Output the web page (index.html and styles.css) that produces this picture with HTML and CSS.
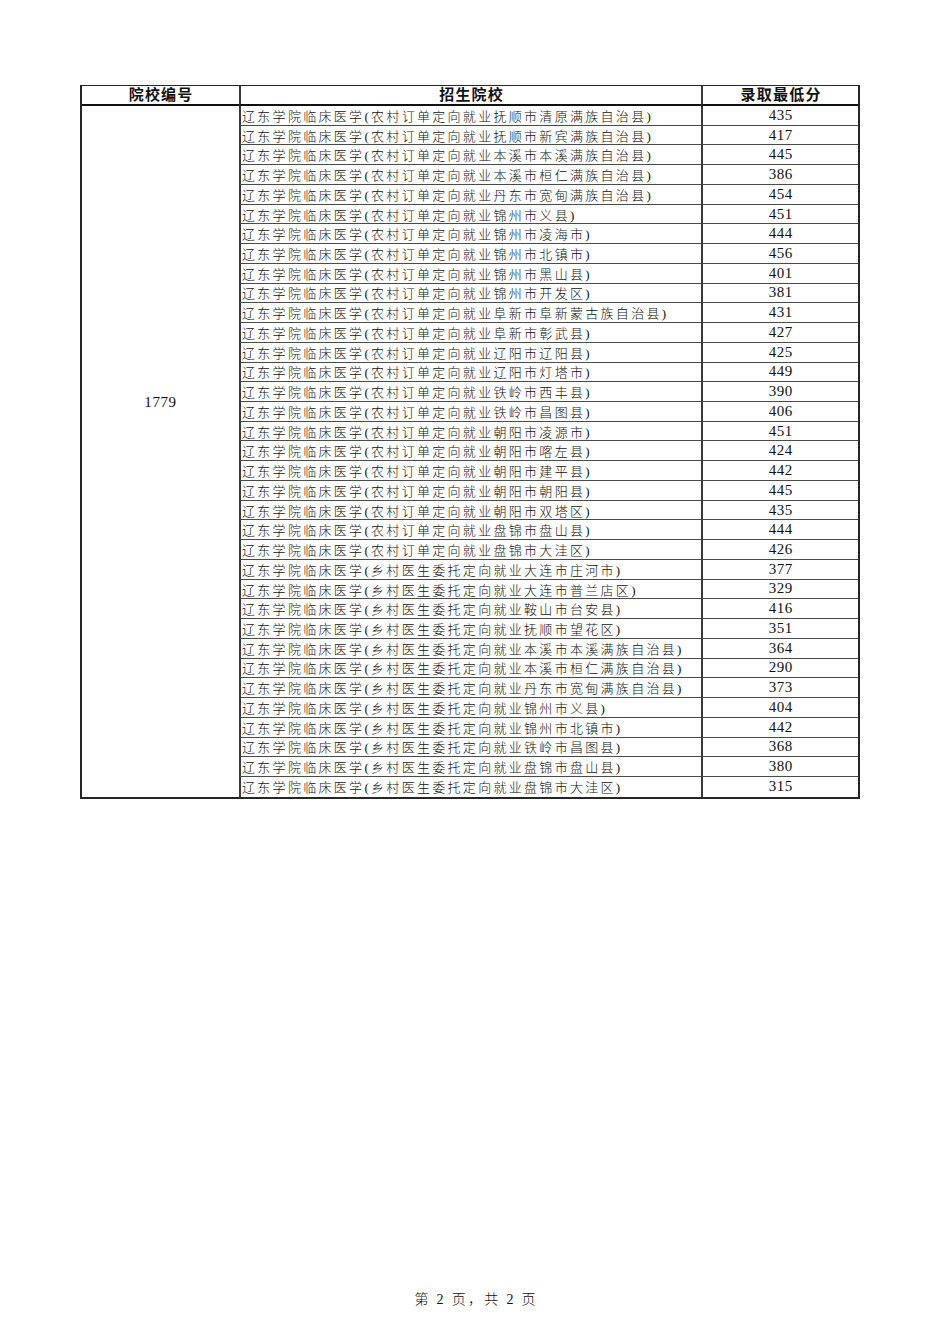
FILE: index.html
```html
<!DOCTYPE html>
<html lang="zh-CN">
<head>
<meta charset="utf-8">
<title>录取最低分</title>
<link rel="stylesheet" href="styles.css">
</head>
<body>
<div class="page">
  <div class="sheet">
    <div class="head">院校编号</div>
    <div class="head col">招生院校</div>
    <div class="head col">录取最低分</div>
    <div class="code"><span>1779</span></div>

    <div class="name">辽东学院临床医学(农村订单定向就业抚顺市清原满族自治县)</div><div class="score">435</div>
    <div class="name">辽东学院临床医学(农村订单定向就业抚顺市新宾满族自治县)</div><div class="score">417</div>
    <div class="name">辽东学院临床医学(农村订单定向就业本溪市本溪满族自治县)</div><div class="score">445</div>
    <div class="name">辽东学院临床医学(农村订单定向就业本溪市桓仁满族自治县)</div><div class="score">386</div>
    <div class="name">辽东学院临床医学(农村订单定向就业丹东市宽甸满族自治县)</div><div class="score">454</div>
    <div class="name">辽东学院临床医学(农村订单定向就业锦州市义县)</div><div class="score">451</div>
    <div class="name">辽东学院临床医学(农村订单定向就业锦州市凌海市)</div><div class="score">444</div>
    <div class="name">辽东学院临床医学(农村订单定向就业锦州市北镇市)</div><div class="score">456</div>
    <div class="name">辽东学院临床医学(农村订单定向就业锦州市黑山县)</div><div class="score">401</div>
    <div class="name">辽东学院临床医学(农村订单定向就业锦州市开发区)</div><div class="score">381</div>
    <div class="name">辽东学院临床医学(农村订单定向就业阜新市阜新蒙古族自治县)</div><div class="score">431</div>
    <div class="name">辽东学院临床医学(农村订单定向就业阜新市彰武县)</div><div class="score">427</div>
    <div class="name">辽东学院临床医学(农村订单定向就业辽阳市辽阳县)</div><div class="score">425</div>
    <div class="name">辽东学院临床医学(农村订单定向就业辽阳市灯塔市)</div><div class="score">449</div>
    <div class="name">辽东学院临床医学(农村订单定向就业铁岭市西丰县)</div><div class="score">390</div>
    <div class="name">辽东学院临床医学(农村订单定向就业铁岭市昌图县)</div><div class="score">406</div>
    <div class="name">辽东学院临床医学(农村订单定向就业朝阳市凌源市)</div><div class="score">451</div>
    <div class="name">辽东学院临床医学(农村订单定向就业朝阳市喀左县)</div><div class="score">424</div>
    <div class="name">辽东学院临床医学(农村订单定向就业朝阳市建平县)</div><div class="score">442</div>
    <div class="name">辽东学院临床医学(农村订单定向就业朝阳市朝阳县)</div><div class="score">445</div>
    <div class="name">辽东学院临床医学(农村订单定向就业朝阳市双塔区)</div><div class="score">435</div>
    <div class="name">辽东学院临床医学(农村订单定向就业盘锦市盘山县)</div><div class="score">444</div>
    <div class="name">辽东学院临床医学(农村订单定向就业盘锦市大洼区)</div><div class="score">426</div>
    <div class="name">辽东学院临床医学(乡村医生委托定向就业大连市庄河市)</div><div class="score">377</div>
    <div class="name">辽东学院临床医学(乡村医生委托定向就业大连市普兰店区)</div><div class="score">329</div>
    <div class="name">辽东学院临床医学(乡村医生委托定向就业鞍山市台安县)</div><div class="score">416</div>
    <div class="name">辽东学院临床医学(乡村医生委托定向就业抚顺市望花区)</div><div class="score">351</div>
    <div class="name">辽东学院临床医学(乡村医生委托定向就业本溪市本溪满族自治县)</div><div class="score">364</div>
    <div class="name">辽东学院临床医学(乡村医生委托定向就业本溪市桓仁满族自治县)</div><div class="score">290</div>
    <div class="name">辽东学院临床医学(乡村医生委托定向就业丹东市宽甸满族自治县)</div><div class="score">373</div>
    <div class="name">辽东学院临床医学(乡村医生委托定向就业锦州市义县)</div><div class="score">404</div>
    <div class="name">辽东学院临床医学(乡村医生委托定向就业锦州市北镇市)</div><div class="score">442</div>
    <div class="name">辽东学院临床医学(乡村医生委托定向就业铁岭市昌图县)</div><div class="score">368</div>
    <div class="name">辽东学院临床医学(乡村医生委托定向就业盘锦市盘山县)</div><div class="score">380</div>
    <div class="name last">辽东学院临床医学(乡村医生委托定向就业盘锦市大洼区)</div><div class="score last">315</div>
  </div>
  <div class="footer">第 2 页，共 2 页</div>
</div>
</body>
</html>
```
FILE: styles.css
```css
html, body {
  margin: 0;
  padding: 0;
  background: #ffffff;
}

.page {
  height: 1344px;
  box-sizing: border-box;
  padding: 85px 0 36px 80px;
  display: flex;
  flex-direction: column;
  align-items: flex-start;
  color: #111;
  font-family: "Liberation Serif", "Noto Sans CJK SC", serif;
}

.sheet {
  display: grid;
  grid-template-columns: 157px 462px 157px;
  grid-template-rows: 20px repeat(35, 19.743px);
  border: 2px solid #262626;
  border-top-width: 1px;
}

.sheet > div {
  box-sizing: border-box;
  display: flex;
  align-items: center;
  white-space: nowrap;
}

.head {
  justify-content: center;
  font-family: "Noto Sans CJK SC", sans-serif;
  font-weight: 700;
  font-size: 15px;
  line-height: 18px;
  letter-spacing: 1.2px;
  padding-left: 1.2px;
  padding-bottom: 2px;
  border-bottom: 2px solid #111;
}

.col {
  border-left: 2px solid #3a3a3a;
}

.code {
  grid-column: 1;
  grid-row: 2 / span 35;
  justify-content: center;
  align-items: flex-start !important;
  padding-top: 287px;
  font-size: 15px;
  line-height: 18px;
  letter-spacing: 0.6px;
}

.name {
  border-left: 2px solid #3a3a3a;
  border-bottom: 1px solid #4a4a4a;
  padding-left: 1px;
  font-size: 13px;
  font-weight: 300;
  letter-spacing: 2.3px;
  overflow: hidden;
}

.score {
  border-left: 2px solid #3a3a3a;
  border-bottom: 1px solid #4a4a4a;
  justify-content: center;
  font-size: 15px;
  letter-spacing: 0.6px;
  padding-left: 0.6px;
}

.sheet > .last {
  border-bottom: none;
}

.footer {
  margin-top: auto;
  align-self: stretch;
  margin-left: -80px;
  text-align: center;
  font-family: "Liberation Serif", "Noto Sans CJK SC", serif;
  font-weight: 300;
  font-size: 14px;
  line-height: 16px;
  letter-spacing: 2.3px;
  padding-left: 2.3px;
}
```
